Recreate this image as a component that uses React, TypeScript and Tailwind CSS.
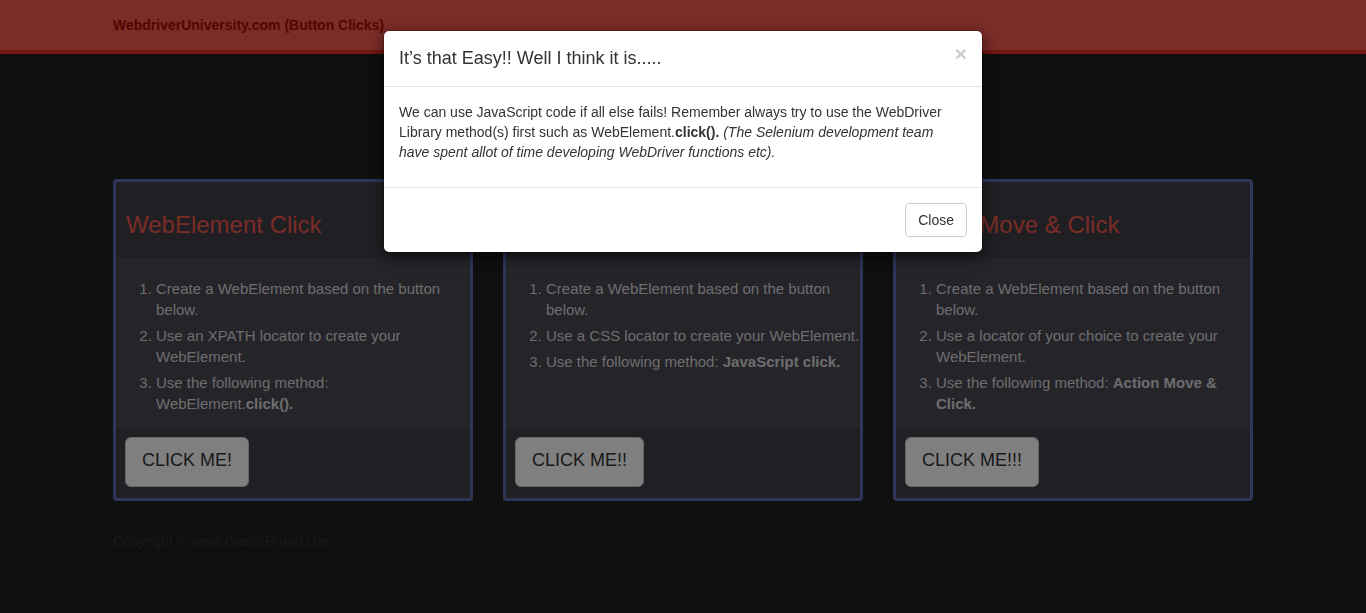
import type { ReactNode } from 'react';

type Card = { title: string; steps: ReactNode[]; action: string };

const cards: Card[] = [
  {
    title: 'WebElement Click',
    steps: [
      'Create a WebElement based on the button below.',
      'Use an XPATH locator to create your WebElement.',
      <>Use the following method:<br />WebElement.<b>click().</b></>,
    ],
    action: 'CLICK ME!',
  },
  {
    title: 'JavaScript Click',
    steps: [
      'Create a WebElement based on the button below.',
      'Use a CSS locator to create your WebElement.',
      <>Use the following method: <b>JavaScript click.</b></>,
    ],
    action: 'CLICK ME!!',
  },
  {
    title: 'Action Move & Click',
    steps: [
      'Create a WebElement based on the button below.',
      'Use a locator of your choice to create your WebElement.',
      <>Use the following method: <b>Action Move &amp; Click.</b></>,
    ],
    action: 'CLICK ME!!!',
  },
];

function MethodCard({ title, steps, action }: Card) {
  return (
    <section className="flex flex-col rounded border-3 border-[#5e6cb4] bg-[#403e46]">
      <h2 className="px-2.5 pt-[27px] pb-[17px] text-2xl leading-8 text-[#f4584f]">{title}</h2>
      <ol className="grow list-decimal bg-[#4a4852] pt-5 pb-[9px] pl-10 text-[15px] leading-[21px] text-[#dadada]">
        {steps.map((step, i) => (
          <li key={i} className="mb-[5px]">{step}</li>
        ))}
      </ol>
      <div className="px-[9px] pt-[9px] pb-[11px]">
        <button className="rounded-md border border-[#ccc] bg-white px-4 pt-[9px] pb-[13px] text-lg leading-[26px] text-[#333]">
          {action}
        </button>
      </div>
    </section>
  );
}

function EasyDialog() {
  return (
    <div
      role="dialog"
      aria-modal="true"
      aria-labelledby="dialog-title"
      className="mx-auto mt-[30px] w-full max-w-[600px] rounded-md border border-black/20 bg-white bg-clip-padding text-sm leading-5 text-[#333] shadow-[0_5px_15px_rgba(0,0,0,0.5)]"
    >
      <header className="flex items-start justify-between border-b border-[#e5e5e5] p-[15px]">
        <h4 id="dialog-title" className="text-lg leading-[25px]">It’s that Easy!! Well I think it is.....</h4>
        <button aria-label="Close dialog" className="text-[21px] leading-4 font-bold text-[#ccc]">×</button>
      </header>
      <div className="p-[15px]">
        <p className="mb-2.5">
          We can use JavaScript code if all else fails! Remember always try to use the WebDriver Library
          method(s) first such as WebElement.<b>click().</b>{' '}
          <i>(The Selenium development team have spent allot of time developing WebDriver functions etc).</i>
        </p>
      </div>
      <footer className="flex justify-end border-t border-[#e5e5e5] p-[15px]">
        <button className="rounded border border-[#ccc] bg-white px-3 py-1.5">Close</button>
      </footer>
    </div>
  );
}

export default function App() {
  return (
    <div className="min-h-screen bg-[#1e1e1e] font-['Liberation_Sans',Arial,sans-serif] text-sm leading-5">
      <nav className="border-b-4 border-[#e62c20] bg-[#f4584f]">
        <div className="mx-auto max-w-[1170px] px-[15px] py-[15px]">
          <a href="#" className="font-bold text-[#aa0800]">WebdriverUniversity.com (Button Clicks)</a>
        </div>
      </nav>
      <main className="mx-auto max-w-[1170px] px-[15px] pt-[125px]">
        <div className="grid grid-cols-3 gap-[30px]">
          {cards.map((card) => (
            <MethodCard key={card.action} {...card} />
          ))}
        </div>
        <footer className="mt-[30px] text-[#333]">Copyright © www.GianniBruno.com</footer>
      </main>
      <div className="fixed inset-0 overflow-y-auto bg-black/50">
        <EasyDialog />
      </div>
    </div>
  );
}
